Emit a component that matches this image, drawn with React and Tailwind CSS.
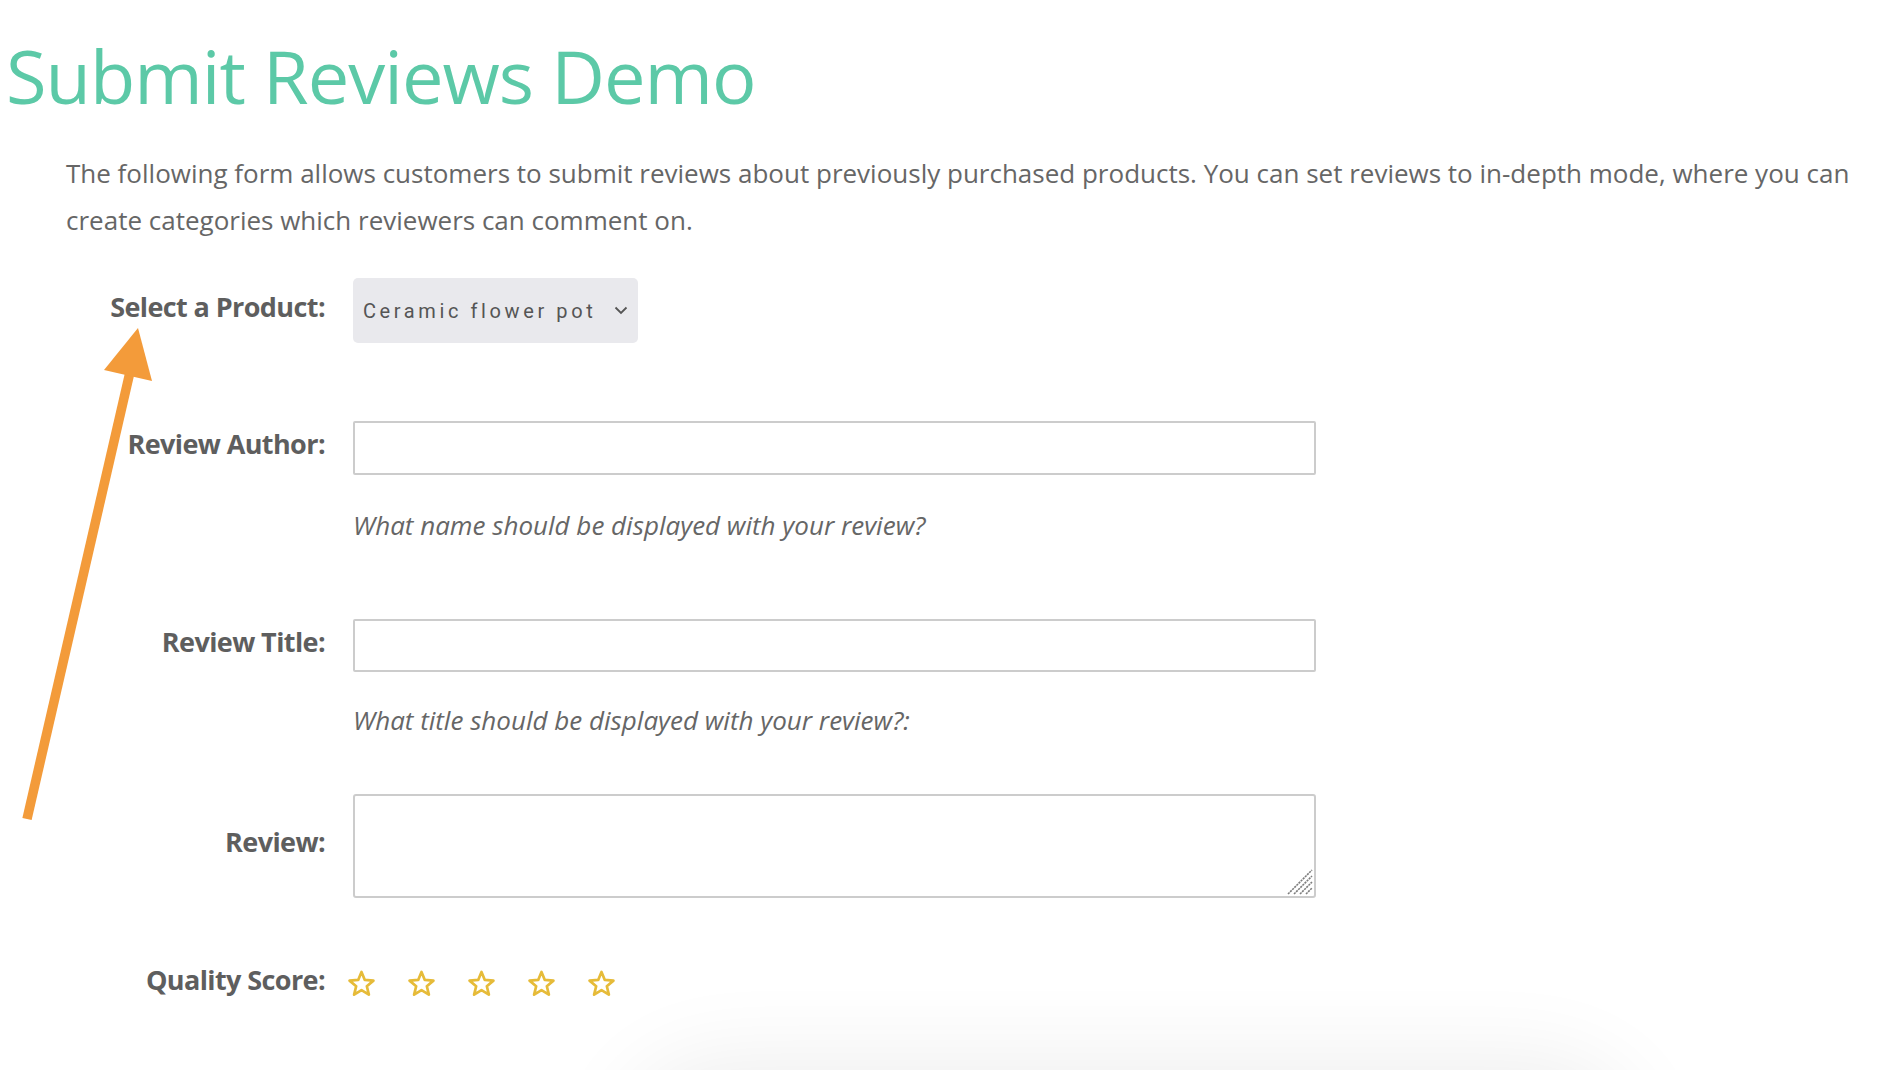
const Star = () => (
  <svg width="29" height="29" viewBox="0 0 30 30" className="block">
    <polygon
      points="15,2 18.41,10.31 27.36,10.98 20.52,16.79 22.64,25.52 15,20.8 7.36,25.52 9.48,16.79 2.64,10.98 11.59,10.31"
      fill="none"
      stroke="#e6bb39"
      strokeWidth="2.8"
      strokeLinejoin="round"
    />
  </svg>
);

const Label = ({ children }) => (
  <div className="w-[325px] shrink-0 pb-2 text-right font-['Open_Sans',sans-serif] text-[27px] font-bold leading-[36px] tracking-[-0.6px] text-[#5e5e5e]">
    {children}
  </div>
);

const Hint = ({ children, className }) => (
  <p className={"ml-[353px] font-['Open_Sans',sans-serif] text-[26px] italic leading-[36px] text-[#666666] " + className}>
    {children}
  </p>
);

export default function App() {
  return (
    <div className="relative h-[1070px] w-full overflow-hidden bg-white">
      <h1 className="ml-[6px] mt-[39px] font-['Open_Sans',sans-serif] text-[74px] font-normal leading-[74px] tracking-[-1px] text-[#5cc9a7]">
        Submit Reviews Demo
      </h1>
      <p className="ml-[66px] mt-[37px] font-['Open_Sans',sans-serif] text-[26px] leading-[47px] text-[#666666] whitespace-nowrap">
        The following form allows customers to submit reviews about previously purchased products. You can set reviews to in-depth mode, where you can
        <br />
        create categories which reviewers can comment on.
      </p>

      <div className="flex flex-col">
        <div className="mt-[34px] flex items-center">
          <Label>Select a Product:</Label>
          <div className="ml-[28px] flex h-[65px] w-[285px] items-center justify-between rounded-[5px] bg-[#e9e9ed] pl-[10px] pr-[10px]">
            <span className="font-['Roboto',sans-serif] text-[20px] tracking-[3.6px] text-[#555555]">Ceramic flower pot</span>
            <svg width="14" height="9" viewBox="0 0 14 9" className="block">
              <polyline points="1.5,1.5 7,7 12.5,1.5" fill="none" stroke="#555555" strokeWidth="1.8" />
            </svg>
          </div>
        </div>

        <div className="mt-[78px] flex items-center">
          <Label>Review Author:</Label>
          <input type="text" className="ml-[28px] h-[54px] w-[963px] rounded-[2px] border-2 border-[#cccccc] bg-white outline-none" />
        </div>
        <Hint className="mt-[32px]">What name should be displayed with your review?</Hint>

        <div className="mt-[76px] flex items-center">
          <Label>Review Title:</Label>
          <input type="text" className="ml-[28px] h-[53px] w-[963px] rounded-[2px] border-2 border-[#cccccc] bg-white outline-none" />
        </div>
        <Hint className="mt-[30px]">What title should be displayed with your review?:</Hint>

        <div className="mt-[56px] flex items-center">
          <Label>Review:</Label>
          <div className="relative ml-[28px] h-[104px] w-[963px]">
            <textarea className="block h-full w-full resize-none rounded-[3px] border-2 border-[#cccccc] bg-white outline-none" />
            <svg className="pointer-events-none absolute bottom-[3px] right-[3px]" width="26" height="26" viewBox="0 0 26 26">
              <g stroke="#7d7d7d" strokeWidth="1.6" strokeDasharray="2.2 0.8">
                <line x1="1" y1="25" x2="25" y2="1" />
                <line x1="7" y1="25" x2="25" y2="7" />
                <line x1="13" y1="25" x2="25" y2="13" />
                <line x1="19" y1="25" x2="25" y2="19" />
              </g>
            </svg>
          </div>
        </div>

        <div className="mt-[64px] flex items-center">
          <Label>Quality Score:</Label>
          <div className="ml-[22px] flex items-center gap-[31px]">
            <Star />
            <Star />
            <Star />
            <Star />
            <Star />
          </div>
        </div>
      </div>

      <svg className="pointer-events-none absolute left-0 top-0" width="200" height="840" viewBox="0 0 200 840">
        <line x1="27" y1="819" x2="130" y2="372" stroke="#f39b3a" strokeWidth="9.5" />
        <polygon points="138,328 104,370 152,381" fill="#f39b3a" />
      </svg>

      <div className="pointer-events-none absolute left-[650px] top-[1090px] h-[140px] w-[960px] rounded-full bg-white shadow-[0_0_90px_30px_rgba(0,0,0,0.07)]" />
    </div>
  );
}
